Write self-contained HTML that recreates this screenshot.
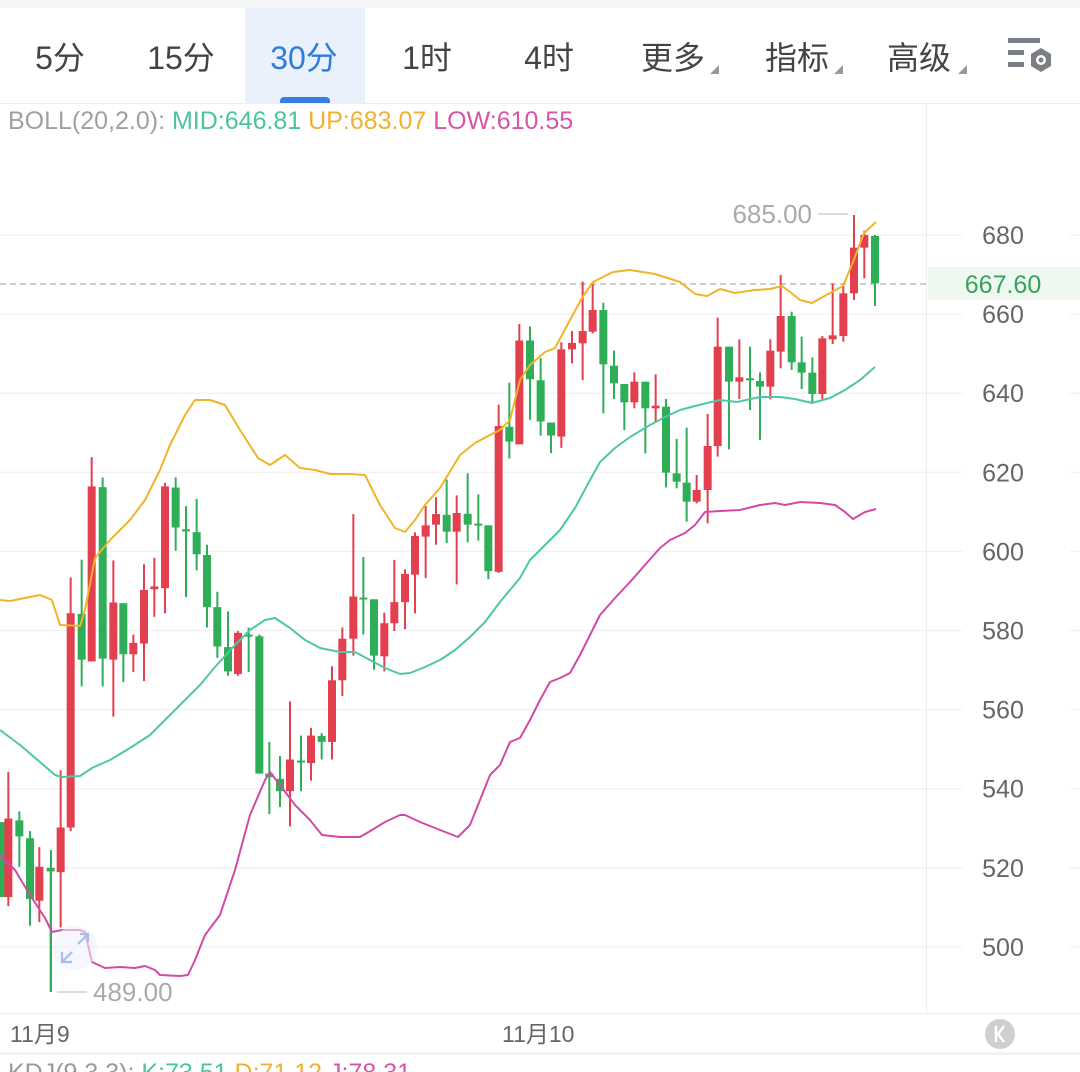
<!DOCTYPE html>
<html><head><meta charset="utf-8">
<style>
html,body{margin:0;padding:0;background:#fff;}
body{width:1080px;height:1072px;overflow:hidden;position:relative;font-family:"Liberation Sans","Noto Sans CJK SC",sans-serif;}
.top{position:absolute;left:0;top:0;width:1080px;height:8px;background:#f4f5f6;}
.tab{position:absolute;top:33px;font-size:32px;color:#444;text-align:center;width:110px;}
.act{position:absolute;left:245px;top:8px;width:120px;height:95px;background:#e8f1fc;}
.pill{position:absolute;left:280px;top:97px;width:50px;height:7px;border-radius:4px 4px 0 0;background:#3a7de0;}
.tri{position:absolute;width:0;height:0;border-left:9px solid transparent;border-bottom:9px solid #999;}
svg{position:absolute;left:0;top:0;}
</style></head><body>
<div class="top"></div>
<div class="act"></div>
<div class="pill"></div>
<div class="tab" style="left:5px">5分</div>
<div class="tab" style="left:126px">15分</div>
<div class="tab" style="left:249px;color:#2f7be0">30分</div>
<div class="tab" style="left:372px">1时</div>
<div class="tab" style="left:494px">4时</div>
<div class="tab" style="left:618px">更多</div>
<div class="tri" style="left:710px;top:65px"></div>
<div class="tab" style="left:742px">指标</div>
<div class="tri" style="left:834px;top:65px"></div>
<div class="tab" style="left:864px">高级</div>
<div class="tri" style="left:958px;top:65px"></div>
<svg id="s" width="1080" height="1072" xmlns="http://www.w3.org/2000/svg"></svg>
<script>
var s=document.getElementById('s');var h='';
h+='<rect x="1008" y="38" width="32" height="5" fill="#7a7e85"/><rect x="1008" y="50" width="16" height="5" fill="#7a7e85"/><rect x="1008" y="62" width="16" height="5" fill="#7a7e85"/>';
h+='<polygon points="1041,48 1051,54 1051,66 1041,72 1031,66 1031,54" fill="#7a7e85"/><circle cx="1041" cy="60" r="5" fill="#fff"/><circle cx="1041" cy="60" r="2.5" fill="#7a7e85"/>';
h+='<line x1="0" y1="103.5" x2="1080" y2="103.5" stroke="#eee"/>';
h+='<line x1="926.5" y1="104" x2="926.5" y2="1013" stroke="#eee"/>';
h+='<line x1="0" y1="1013.5" x2="1080" y2="1013.5" stroke="#eee"/>';
h+='<rect x="0" y="1052" width="1080" height="3" fill="#f3f3f3"/>';
h+='<text x="8" y="129" font-size="25" font-family="Liberation Sans,sans-serif"><tspan fill="#a0a0a0">BOLL(20,2.0): </tspan><tspan fill="#4cc3a0">MID:646.81 </tspan><tspan fill="#f0b030">UP:683.07 </tspan><tspan fill="#d654a5">LOW:610.55</tspan></text>';
var pr=[680,660,640,620,600,580,560,540,520,500];
pr.forEach(function(p,i){var y=235+i*79.1;
 h+='<line x1="0" y1="'+y+'" x2="926" y2="'+y+'" stroke="#eeeeee"/>';
 h+='<line x1="926" y1="'+y+'" x2="962" y2="'+y+'" stroke="#eeeeee"/><line x1="1070" y1="'+y+'" x2="1080" y2="'+y+'" stroke="#eeeeee"/>';
});
h+='<line x1="0" y1="284" x2="926" y2="284" stroke="#999" stroke-dasharray="6,4"/>';
h+='<rect x="928" y="267" width="152" height="33" fill="#eef8f1"/>';
h+='<text x="1003" y="293" text-anchor="middle" font-size="25" fill="#38a35a">667.60</text>';
pr.forEach(function(p,i){var y=235+i*79.1;
 h+='<text x="1003" y="'+(y+9)+'" text-anchor="middle" font-size="25" fill="#666">'+p+'</text>';
});
var Z3=[[3,1070,1280,1070,1280,'g'],[25,1060,1280,930,1305,'r'],[58,1065,1110,1040,1195,'g'],[90,1115,1285,1095,1360,'g'],[118,1195,1290,1140,1350,'r'],[152,1198,1208,1198,1545,'g'],[182,1085,1210,925,1365,'r'],[212,485,1085,385,1095,'r'],[245,487,615,335,690,'g'],[275,130,620,48,620,'r'],[308,132,612,105,690,'g'],[340,455,615,337,775,'r'],[370,457,600,457,678,'g'],[400,568,600,545,650,'r'],[432,420,570,348,675,'r'],[463,410,418,330,495,'r'],[495,130,415,120,485,'r'],[527,133,245,105,310,'g'],[558,250,256,185,440,'g'],[590,258,320,165,365,'g'],[621,322,468,293,525,'g'],[652,468,578,425,610,'g'],[684,580,648,480,660,'g'],[714,540,655,535,660,'r'],[746,545,549,525,650,'g']];
var Z4=[[28,955,1345,950,1345,'g'],[58,1345,1355,1255,1460,'g'],[90,1360,1395,1295,1440,'g'],[120,1305,1395,1140,1495,'r'],[153,1308,1313,1237,1395,'g'],[183,1237,1315,1215,1365,'r'],[215,1238,1255,1230,1305,'g'],[246,1080,1255,1040,1305,'r'],[277,962,1080,930,1125,'r'],[310,842,962,608,1010,'r'],[340,845,850,730,950,'g'],[372,850,1010,850,1050,'g'],[403,918,1012,888,1055,'r'],[433,858,918,738,940,'r'],[465,778,858,765,935,'r'],[495,670,780,660,890,'r'],[527,640,672,585,790,'r'],[558,608,638,560,695,'r'],[590,610,658,510,690,'g'],[620,605,658,555,808,'r'],[653,607,638,492,688,'g'],[685,635,640,552,683,'g'],[715,640,770,640,793,'g'],[746,358,772,297,775,'r'],[778,360,402,235,450,'g'],[808,115,410,68,410,'r'],[840,115,225,75,340,'g'],[872,228,345,165,385,'g'],[903,348,385,348,435,'g'],[934,140,388,120,420,'r'],[966,122,140,88,180,'r']];
var Z5=[[8,393,430,245,540,'r'],[38,330,395,250,400,'r'],[70,330,493,308,640,'g'],[102,497,550,452,597,'g'],[133,552,607,552,690,'g'],[163,545,607,517,625,'r'],[196,545,625,545,760,'g'],[227,617,625,523,668,'r'],[258,620,818,597,862,'g'],[290,820,845,717,865,'g'],[320,848,905,683,965,'g'],[350,870,905,825,910,'r'],[383,738,870,642,970,'r'],[413,440,738,353,770,'r'],[447,440,545,440,748,'g'],[478,532,545,418,597,'r'],[510,535,540,440,630,'g'],[540,543,560,517,720,'g'],[571,452,560,418,598,'r'],[602,348,455,225,505,'r'],[635,348,487,335,510,'g'],[665,487,518,410,567,'g'],[697,518,582,472,610,'g'],[727,415,582,408,598,'r'],[758,406,418,250,432,'r'],[790,280,408,250,425,'r'],[822,143,280,45,300,'r'],[853,105,143,92,235,'r'],[885,108,250,105,318,'g']];
function draw(L,ox,sx,oy,sy){L.forEach(function(c){
 var x=ox+c[0]/sx,bt=oy+c[1]/sy,bb=oy+c[2]/sy,wt=oy+c[3]/sy,wb=oy+c[4]/sy;
 var col=c[5]=='r'?'#e3404f':'#2fae58';
 h+='<line x1="'+x+'" y1="'+wt+'" x2="'+x+'" y2="'+wb+'" stroke="'+col+'" stroke-width="2"/>';
 h+='<rect x="'+(x-4)+'" y="'+bt+'" width="8" height="'+Math.max(2,bb-bt)+'" fill="'+col+'"/>';
});}
draw(Z3,0,3,440,2.8);draw(Z4,250,3,300,2.84);draw(Z5,580,3,200,3);
h+='<line x1="51" y1="850" x2="51" y2="992" stroke="#2fae58" stroke-width="2"/>';
function pl(p,col){h+='<polyline fill="none" stroke="'+col+'" stroke-width="2" stroke-linejoin="round" points="'+p+'"/>';}
pl('0,600 10,601 25,598 40,595 52,600 60,625 80,626 85,610 95,558 110,540 130,520 145,500 160,470 170,445 185,415 195,400 210,400 225,405 240,430 258,458 270,465 285,455 300,468 315,470 330,474 350,474 365,475 380,505 395,528 405,532 415,520 425,505 440,488 460,455 475,443 490,435 500,430 510,420 520,380 530,365 545,352 555,348 570,320 582,298 593,282 613,272 630,270 655,274 680,282 695,294 707,296 720,289 735,293 755,290 770,289 782,286 790,292 800,300 812,303 830,293 843,286 853,262 864,233 876,222','#f0b429');
pl('0,730 20,745 40,762 55,775 62,777 80,776 92,768 110,760 130,748 150,735 170,715 185,700 200,685 215,667 235,645 250,630 265,620 275,618 290,628 305,640 320,648 340,652 355,652 370,660 385,668 400,674 410,673 425,667 440,660 455,650 470,637 485,622 500,602 510,590 520,578 530,560 545,545 560,530 575,508 590,480 600,462 615,448 630,437 650,425 665,417 680,410 695,406 707,403 720,400 737,402 760,397 780,397 795,399 812,403 830,398 845,390 860,380 875,367','#4fc6a6');
pl('0,855 15,870 30,895 45,918 52,932 62,930 80,930 85,932 92,962 105,968 120,967 135,968 145,966 155,970 160,975 180,976 188,975 195,960 205,935 220,915 235,870 250,815 265,780 270,772 280,785 295,805 310,820 322,835 340,837 360,837 372,830 385,822 400,815 405,815 420,822 440,830 458,837 470,825 480,800 490,775 500,765 510,742 520,738 530,720 540,700 550,682 560,678 570,673 580,655 590,635 600,615 615,598 630,582 645,565 660,548 670,540 685,533 695,525 705,512 720,511 740,510 760,505 775,503 785,505 800,502 820,503 835,505 845,512 853,519 865,512 876,509','#d24aa6');
h+='<text x="812" y="223" text-anchor="end" font-size="26" fill="#aaa">685.00</text><line x1="818" y1="214" x2="848" y2="214" stroke="#bbb"/>';
h+='<text x="93" y="1001" font-size="26" fill="#aaa">489.00</text><line x1="57" y1="992" x2="87" y2="992" stroke="#bbb"/>';
h+='<circle cx="75" cy="948" r="22" fill="#eef2fb" opacity="0.6"/>';
h+='<path d="M62,952 L62,962 L72,962 M62,962 L72,952 M78,944 L88,934 M80,934 L88,934 L88,942" fill="none" stroke="#a8bde8" stroke-width="2.2"/>';
h+='<text x="10" y="1042" font-size="23" fill="#666">11月9</text>';
h+='<text x="502" y="1042" font-size="23" fill="#666">11月10</text>';
h+='<circle cx="1000" cy="1034" r="15" fill="#cfcfcf"/><path d="M996,1026 L996,1042 M1004,1026 L998,1034 L1004,1042" fill="none" stroke="#fff" stroke-width="2.5"/>';
h+='<text x="8" y="1081" font-size="25"><tspan fill="#999">KDJ(9,3,3): </tspan><tspan fill="#4cc3a0">K:73.51 </tspan><tspan fill="#f0b030">D:71.12 </tspan><tspan fill="#d654a5">J:78.31</tspan></text>';
s.innerHTML=h;
</script>
</body></html>
